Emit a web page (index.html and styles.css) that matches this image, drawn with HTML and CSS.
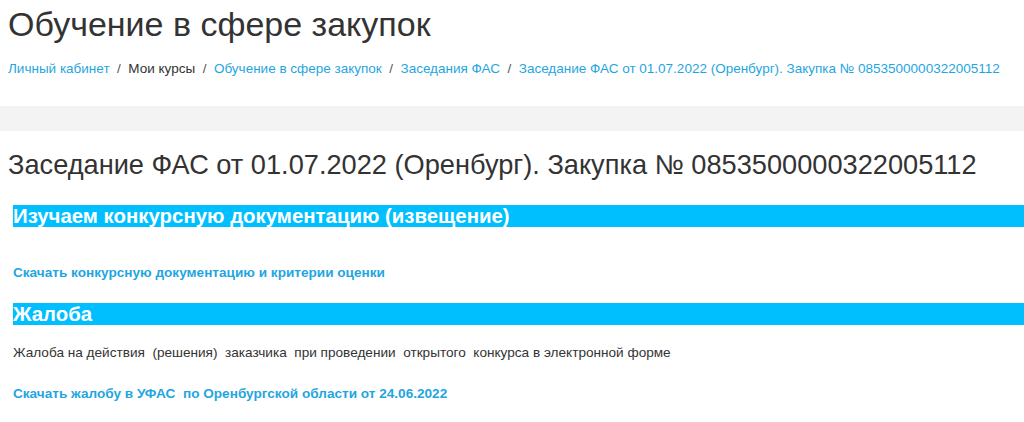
FILE: index.html
```html
<!DOCTYPE html>
<html lang="ru">
<head>
<meta charset="utf-8">
<title>Обучение в сфере закупок</title>
<link rel="stylesheet" href="styles.css">
</head>
<body>
<header class="page-header">
  <h1 class="page-title">Обучение в сфере закупок</h1>
  <nav class="breadcrumb">
    <a href="#">Личный кабинет</a><span class="sep">/</span><span class="crumb-text">Мои курсы</span><span class="sep">/</span><a href="#">Обучение в сфере закупок</a><span class="sep">/</span><a href="#">Заседания ФАС</a><span class="sep">/</span><a href="#">Заседание ФАС от 01.07.2022 (Оренбург). Закупка № 0853500000322005112</a>
  </nav>
</header>
<div class="band"></div>
<main class="content">
  <h2 class="content-title">Заседание ФАС от 01.07.2022 (Оренбург). Закупка № 0853500000322005112</h2>
  <section class="block">
    <h3 class="bar">Изучаем конкурсную документацию (извещение)</h3>
    <p class="dl dl-first"><a href="#">Скачать конкурсную документацию и критерии оценки</a></p>
  </section>
  <section class="block">
    <h3 class="bar">Жалоба</h3>
    <p class="desc">Жалоба на действия&nbsp; (решения)&nbsp; заказчика&nbsp; при проведении&nbsp; открытого&nbsp; конкурса в электронной форме</p>
    <p class="dl"><a href="#">Скачать жалобу в УФАС&nbsp; по Оренбургской области от 24.06.2022</a></p>
  </section>
</main>
</body>
</html>
```

FILE: styles.css
```css
* { box-sizing: border-box; }
html, body { margin: 0; padding: 0; background: #fff; }
body {
  font-family: "Liberation Sans", Arial, sans-serif;
  color: #333;
}
a { color: #1fa6df; text-decoration: none; }

.page-header { padding: 0 8px; height: 106px; }
.page-title {
  margin: 0;
  padding-top: 4px;
  font-size: 34px;
  line-height: 40px;
  font-weight: 400;
  color: #333;
}
.breadcrumb {
  margin-top: 16px;
  font-size: 13.5px;
  line-height: 18px;
}
.breadcrumb .sep { margin: 0 7.5px; color: #555; }
.crumb-text { color: #333; }

.band { height: 25px; background: #f3f3f3; }

.content { padding: 0 0 0 8px; }
.content-title {
  margin: 0;
  padding: 18px 0 0 0;
  font-size: 27.2px;
  line-height: 32px;
  font-weight: 400;
  color: #333;
}
.block { margin-left: 5px; }
.bar {
  margin: 0;
  background: #00bfff;
  color: #fff;
  font-size: 20.4px;
  line-height: 22px;
  font-weight: 700;
}
.block:first-of-type .bar { margin-top: 24px; }
.dl {
  margin: 0;
  font-size: 13.6px;
  line-height: 16px;
  font-weight: 700;
}
.dl-first { margin-top: 38px; margin-bottom: 22px; }
.desc {
  margin: 20px 0 0 0;
  font-size: 13.6px;
  line-height: 16px;
}
.desc + .dl { margin-top: 25px; }
```
